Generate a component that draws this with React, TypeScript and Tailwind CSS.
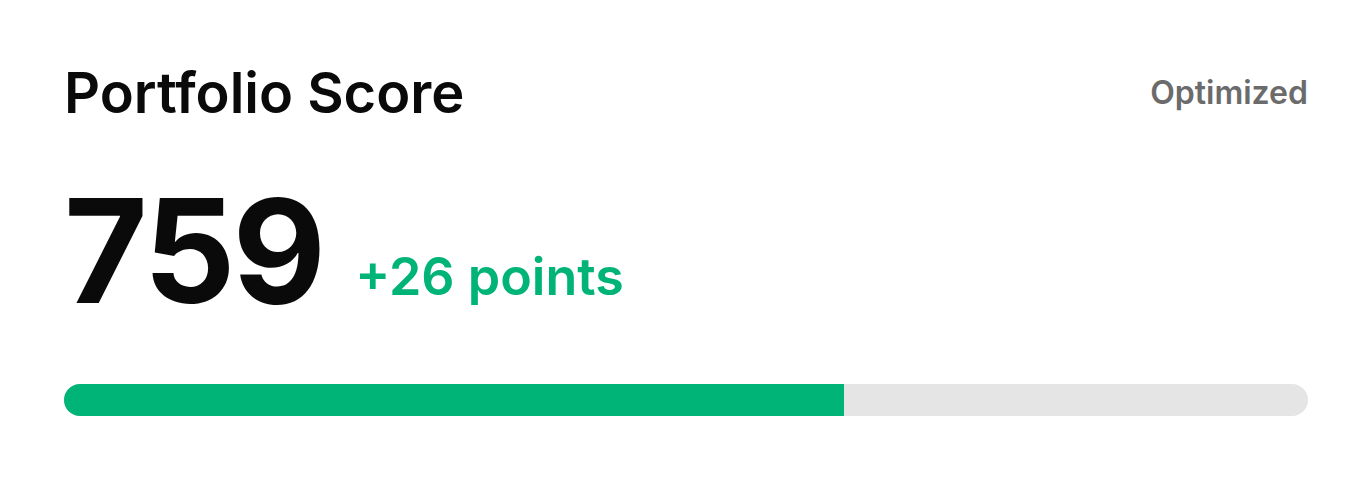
export default function App() {
  return (
    <div className="w-[1372px] h-[480px] bg-white px-16 pt-[65px]" style={{ fontFamily: 'Inter, "Noto Sans", sans-serif' }}>
      <div className="flex items-center justify-between">
        <h1 className="text-[56px] leading-none font-semibold text-[#0a0a0a]">Portfolio Score</h1>
        <span className="text-[32px] leading-none font-semibold text-[#6b6b6b]">Optimized</span>
      </div>
      <div className="mt-[58px] flex items-end gap-8">
        <span className="text-[144px] leading-none font-bold text-[#0a0a0a] tracking-[-0.02em]">759</span>
        <span className="mb-[20px] text-[52px] leading-none font-semibold text-[#00b377]">+26 points</span>
      </div>
      <div className="mt-[61px] h-8 w-full rounded-full bg-[#e5e5e5] overflow-hidden">
        <div className="h-full w-[780px] bg-[#00b377]" />
      </div>
    </div>
  );
}
